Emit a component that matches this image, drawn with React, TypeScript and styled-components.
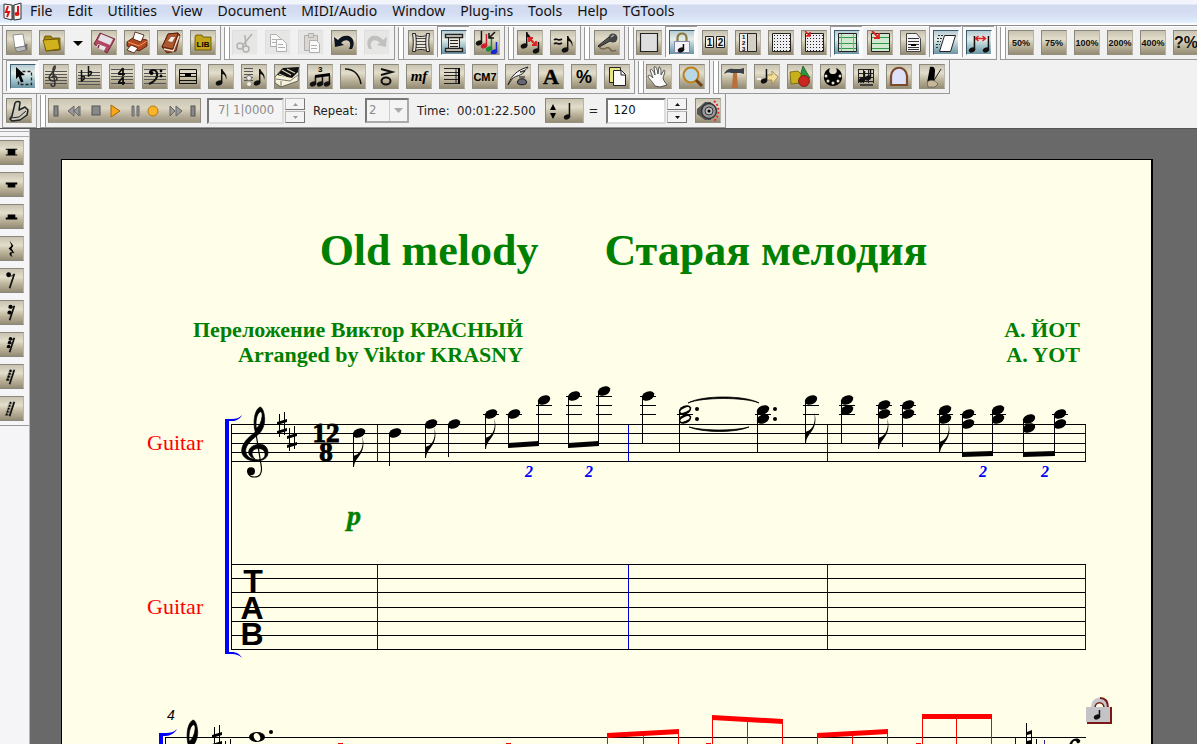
import React from "react";
import styled, { createGlobalStyle, css } from "styled-components";

const GlobalStyle = createGlobalStyle`
  * { box-sizing: border-box; }
  body { margin: 0; background: #f2f2f2; overflow: hidden; }
  button, input, select { font: inherit; margin: 0; padding: 0; }
`;

const ui = `"DejaVu Sans Condensed", "DejaVu Sans", sans-serif`;
const serif = `"Liberation Serif", serif`;
const sans = `"Liberation Sans", sans-serif`;

/* ---------- window ---------- */

const Window = styled.div`
  height: 100vh;
  display: flex;
  flex-direction: column;
  overflow: hidden;
  background: #f2f1f2;
`;

const MenuBar = styled.nav`
  flex: none;
  display: flex;
  align-items: center;
  gap: 15px;
  height: 25px;
  padding: 0 3px 3px;
  background: linear-gradient(#f2f6fc 0, #f2f6fc 4px, #d2daf0 5px, #d5ddf2 14px, #dfedfa 22px, #ffffff 24px);
  font: 14px/20px "Noto Sans", sans-serif;
  color: #111;
`;

const AppIcon = styled.svg`
  flex: none;
  width: 20px;
  height: 20px;
  margin-right: -8px;
`;

const MenuItem = styled.button`
  border: 0;
  background: none;
  color: inherit;
  white-space: nowrap;
`;

const ToolRows = styled.div`
  flex: none;
  border-top: 1px solid #8c8c8c;
  box-shadow: inset 0 1px 0 #fff;
`;

const ToolRow = styled.div`
  display: flex;
  height: 34px;
  padding-left: 2px;
`;

const Group = styled.div<{ $first?: boolean; $lead?: number }>`
  flex: none;
  display: flex;
  align-items: flex-start;
  gap: 7px;
  padding: 4px 4px 0 ${(p) => p.$lead ?? (p.$first ? 3 : 8)}px;
  border-right: 1px solid #989898;
  border-bottom: 1px solid #989898;
  position: relative;
  ${(p) =>
    p.$first
      ? css`border-left: 1px solid #989898;`
      : css`
          margin-left: 3px;
          &::before {
            content: "";
            position: absolute;
            left: 0;
            top: 1px;
            bottom: 0;
            width: 4px;
            border: solid #9a9a9a;
            border-width: 0 1px;
            background: #fff;
          }
        `}
`;

type Look = "normal" | "pressed" | "disabled";

const ToolButton = styled.button<{ $look: Look; $wide?: boolean }>`
  flex: none;
  display: block;
  width: ${(p) => (p.$wide ? 39 : 26)}px;
  height: 25px;
  border: 1px solid #8a887c;
  border-right-color: #b9b5a6;
  border-bottom-color: #958f7e;
  background: linear-gradient(#c8c3b0, #e2decb 35%, #bdb49b 65%, #958c76);
  color: #111;
  overflow: hidden;
  font: bold 10px/22px ${sans};
  white-space: nowrap;
  ${(p) =>
    p.$look === "pressed" &&
    css`
      border-color: #3c5c70 #fff #fff #3c5c70;
      background: linear-gradient(#b5cbd2, #e6eeea 35%, #a5c4cc 65%, #6b95a5);
      box-shadow: 0 0 0 3px #fafafa, -1px -1px 0 3px #9a9a9a;
    `}
  ${(p) =>
    p.$look === "disabled" &&
    css`
      border-color: #dcdcdc #eee #eee #dcdcdc;
      background: #e5e5e3;
      opacity: 0.9;
    `}
`;

const Glyph = styled.svg`
  display: block;
  width: 26px;
  height: 25px;
  margin: -1px;
`;

const ZoomLabel = styled.span<{ $big?: boolean }>`
  display: block;
  font-size: ${(p) => (p.$big ? 16 : 9)}px;
  text-align: center;
`;

const DropButton = styled.button`
  width: 12px;
  height: 25px;
  border: 0;
  background: none;
`;

const Bare = styled.svg`
  display: block;
`;

/* ---------- playback row ---------- */

const Playback = styled.div`
  display: flex;
  align-items: flex-start;
  font: 13px/25px ${ui};
  color: #222;
`;

const Transport = styled.div`
  display: flex;
  justify-content: space-between;
  width: 153px;
  height: 25px;
  margin-right: 6px;
  padding: 0 3px;
  border: 1px solid #8d887a;
  border-bottom-color: #a29d90;
  background: linear-gradient(#cbc5b3, #dbd5c3 40%, #b5ac97 75%, #9f9681);
`;

const TransportButton = styled.button<{ $w: number }>`
  width: ${(p) => p.$w}px;
  height: 23px;
  border: 0;
  background: none;
`;

const Field = styled.input<{ $w: number; $dim?: boolean }>`
  && {
    width: ${(p) => p.$w}px;
    height: 26px;
    padding: 0 0 3px ${(p) => (p.$dim ? 9 : 5)}px;
  }
  border: 2px solid;
  border-color: #777 #ddd #ddd #777;
  background: ${(p) => (p.$dim ? "#f4f4f4" : "#fff")};
  color: ${(p) => (p.$dim ? "#8b8b8b" : "#111")};
  outline: 0;
`;

const Spin = styled.div`
  display: flex;
  flex-direction: column;
  gap: 1px;
  margin: 0 8px 0 1px;
`;

const SpinButton = styled.button`
  display: grid;
  place-items: center;
  width: 20px;
  height: 12px;
  border: 1px solid;
  border-color: #bbb #777 #777 #bbb;
  background: #f4f4f4;
`;

const SelectBox = styled.span`
  position: relative;
  display: block;
  margin-left: 7px;
  svg {
    position: absolute;
    right: 2px;
    top: 2px;
    pointer-events: none;
  }
`;

const Select = styled.select`
  && {
    padding: 0 0 2px 2px;
  }
  display: block;
  appearance: none;
  width: 44px;
  height: 25px;
  border: 2px solid;
  border-color: #777 #aaa #aaa #777;
  border-radius: 0;
  background: #f4f4f4;
  color: #8b8b8b;
  line-height: 19px;
  opacity: 1;
`;

const Label = styled.label`
  display: flex;
  white-space: pre;
`;

const Readout = styled.span`
  margin: 0 9px 0 8px;
  white-space: pre;
`;

const Equals = styled.span`
  margin: 0 8px 0 5px;
`;

/* ---------- workspace ---------- */

const Workspace = styled.main`
  flex: 1;
  min-height: 0;
  display: flex;
  background: #696969;
  border-top: 1px solid #555;
`;

const Palette = styled.aside`
  flex: none;
  width: 30px;
  background: #f5f5f7;
  border-right: 1px solid #b5b5b5;
`;

const PaletteTools = styled.div`
  display: flex;
  flex-direction: column;
  gap: 7px;
  padding: 2px 0 4px;
  border-bottom: 1px solid #999;
  &::before {
    content: "";
    display: block;
    height: 4px;
    margin-bottom: -4px;
    border: solid #aaa;
    border-width: 1px 0;
  }
`;

const RestButton = styled.button`
  width: 24px;
  height: 25px;
  border: 1px solid #8a887c;
  border-left: 0;
  border-right-color: #b9b5a6;
  background: linear-gradient(#c8c3b0, #e2decb 35%, #bdb49b 65%, #958c76);
`;

const Desk = styled.div`
  flex: 1;
  min-width: 0;
  padding: 30px 44px 0 31px;
  overflow: hidden;
`;

const Page = styled.article`
  height: 1400px;
  padding-top: 66px;
  border: solid #000;
  border-width: 1px 2px 2px 1px;
  background: #fffee8;
  font-family: ${serif};
`;

const Title = styled.h1`
  margin: 0;
  padding-left: 34px;
  font: bold 44px/50px ${serif};
  color: #008000;
  text-align: center;
  white-space: pre;
`;

const Credits = styled.div`
  display: flex;
  justify-content: space-between;
  margin-top: 41px;
  padding: 0 71px 0 131px;
  font: bold 22px/25px ${serif};
  color: #008000;
  text-align: right;
`;

const System = styled.section<{ $top: number; $left: number }>`
  display: flex;
  margin-top: ${(p) => p.$top}px;
  padding-left: ${(p) => p.$left}px;
`;

const PartNames = styled.div`
  display: flex;
  flex-direction: column;
  gap: 140px;
  width: 75px;
  padding-top: 47px;
  font: 22px/24px ${serif};
  color: #f00;
`;

const Music = styled.svg`
  flex: none;
  display: block;
`;

/* ---------- icon art ---------- */

const lines = (x1: number, x2: number, ys: number[], c = "#333") =>
  ys.map((y) => <path key={y} d={`M${x1} ${y + 0.5}H${x2}`} stroke={c} fill="none" />);

const dots = (x: number, y: number, n: number, m: number) =>
  Array.from({ length: n * m }, (_, i) => (
    <rect key={i} x={x + (i % n) * 3} y={y + Math.floor(i / n) * 3} width="1" height="1" fill="#222" />
  ));

const eighth = (x: number, y: number, c = "#111") => (
  <g fill={c}>
    <ellipse cx={x} cy={y} rx="3.4" ry="2.5" transform={`rotate(-22 ${x} ${y})`} />
    <path d={`M${x + 2} ${y}V${y - 14}h1.4c.4 3 6 5 3.600 11c.2-4-1.800-5.500-3.600-6V${y}z`} />
  </g>
);

const quarter = (x: number, y: number, c = "#111", h = 12) => (
  <g fill={c}>
    <ellipse cx={x} cy={y} rx="3.300" ry="2.400" transform={`rotate(-22 ${x} ${y})`} />
    <rect x={x + 1.7} y={y - h} width="1.500" height={h} />
  </g>
);

const art: Record<string, React.ReactNode> = {
  new: (
    <g stroke="#777" strokeWidth=".8">
      <path d="M9 17l12-3v6l-10 2z" fill="#666" />
      <path d="M7 5l10-1 2 12-10 2z" fill="#fff" />
      <path d="M9 18l10-2 1 4-9 2z" fill="#bbb" />
    </g>
  ),
  open: (
    <g stroke="#5d4a00" strokeWidth=".8">
      <path d="M5 8l1-2h6l1 2h8v12l-14 1z" fill="#a98a08" />
      <path d="M4 10l15-1 2 10-14 2z" fill="#d2b21c" />
    </g>
  ),
  save: (
    <g>
      <path d="M3 14L9 3l15 6-8 14z" fill="#b04860" stroke="#5a1830" strokeWidth=".8" />
      <path d="M10 4l12 5-3 6-12-5z" fill="#e4e2e8" />
      <path d="M7 14l8 3-2 4-8-4z" fill="#e8e6ea" />
      <path d="M8 15l-1 3" stroke="#802840" strokeWidth="1.500" />
    </g>
  ),
  print: (
    <g stroke="#401000" strokeWidth=".8">
      <path d="M3 12l7-5 13 3v6l-8 5-12-5z" fill="#b4481c" />
      <path d="M11 2l9 3-3 7-8-3z" fill="#fff" />
      <path d="M4 12l11 4 8-5" fill="none" stroke="#ffb080" />
      <path d="M7 15l7 3-4 5-7-3z" fill="#fff" />
    </g>
  ),
  book: (
    <g stroke="#4a1405" strokeWidth=".8">
      <path d="M5 17L11 4l10-1 2 2-4 16-9 2z" fill="#9a4522" />
      <path d="M7 19l9 2 6-15" fill="none" stroke="#f0e4d4" strokeWidth="1.500" />
      <path d="M5 17L11 4l10-1-5 16z" fill="#ad5730" />
      <path d="M11 11l3-4 4 0-3 5z" fill="#eee" stroke="none" />
    </g>
  ),
  lib: (
    <g>
      <path d="M5 7l1-2h6l1 2h8v13H5z" fill="#c4a418" stroke="#5d4a00" strokeWidth=".8" />
      <text x="13" y="17" fontSize="8" fontWeight="bold" fontFamily="Liberation Sans, sans-serif" textAnchor="middle">LIB</text>
    </g>
  ),
  cut: (
    <g fill="none" stroke="#aaa" strokeWidth="1.500">
      <path d="M20 4l-9 11M13 5l1 12" />
      <circle cx="8" cy="16" r="3" />
      <circle cx="14" cy="19" r="3" />
    </g>
  ),
  copy: (
    <g fill="#fafafa" stroke="#a8a8a8">
      <path d="M5.500 4.500h6l4 4v8h-10z" />
      <path d="M11.500 9.500h6l4 4v8h-10z" />
      <path d="M13 14.500h5M13 17.500h7M7 9.500h4M7 12.500h4" />
    </g>
  ),
  paste: (
    <g fill="#d8d4cf" stroke="#a8a8a8">
      <path d="M6.500 5.500h13v15h-13z" />
      <path d="M10.500 3.500h5v4h-5z" />
      <path d="M11.500 10.500h7l3 3v9h-10z" fill="#fafafa" />
      <path d="M13 15.500h6M13 18.500h6" />
    </g>
  ),
  undo: <path d="M3 7l1 10 9-2-3-2c4-4 8-3 9 0 .500 2 0 4-1 6h3c3-5 2-11-3-13-4-1-8 0-11 4z" fill="#0c1420" />,
  redo: <path d="M23 7l-1 10-9-2 3-2c-4-4-8-3-9 0-.500 2 0 4 1 6H5C2 14 3 8 8 6c4-1 8 0 11 4z" fill="#bbb" />,
  scroll: (
    <g fill="#e9e5da" stroke="#222">
      <path d="M7 5c3 2 9 2 12 0v16c-3-2-9-2-12 0z" />
      <path d="M4.500 3.500h3c1 6 1 12 0 18h-3c1-6 1-12 0-18zM18.500 3.500h3c-1 6-1 12 0 18h-3c-1-6-1-12 0-18z" />
      <path d="M8 8.500h10M8 11.500h10M8 14.500h10M8 17.500h10" strokeWidth=".8" />
    </g>
  ),
  page: (
    <g fill="#e9e5da" stroke="#222">
      <path d="M7.500 7v12h11V7z" />
      <path d="M4.500 4.500h17v3h-17zM4.500 18.500h17v3h-17z" strokeWidth="1.400" />
      <path d="M9 10.500h8M9 13.500h8M9 16.500h8" />
    </g>
  ),
  colornotes: (
    <g>
      {quarter(5, 13)}{quarter(10, 16, "#d0202c")}{quarter(15, 19, "#168a34")}{quarter(20, 22, "#1428d0", 10)}
      <path d="M21 2l-5 5M15 3v5h5" stroke="#111" strokeWidth="1.500" fill="none" />
    </g>
  ),
  respace: (
    <g>
      {eighth(7, 16)}{quarter(19, 21, "#111", 9)}
      <path d="M12 8l7 7M12 12V8h4M19 11v4h-4" stroke="#e02020" strokeWidth="1.800" fill="none" />
    </g>
  ),
  approx: (
    <g>
      {eighth(15, 20)}
      <path d="M4 10c3-3 4 2 8-1M4 14c3-3 4 2 8-1" stroke="#111" strokeWidth="1.600" fill="none" />
    </g>
  ),
  mic: (
    <g>
      <path d="M4 16l11-9 3 3-13 7z" fill="#555" stroke="#222" />
      <circle cx="19" cy="8" r="4.500" fill="#444" />
      <path d="M17 7l3-2" stroke="#aaa" strokeWidth="1.500" />
      <path d="M5 17c6 6 8-3 11 2s4 0 6 2" fill="none" stroke="#776a55" strokeWidth="1.500" />
    </g>
  ),
  sheet: <path d="M4.500 3.500h17v18h-17z" fill="#dededf" stroke="#222" strokeWidth="1.200" />,
  lock: (
    <g>
      <path d="M8.500 12V8c0-6 9-6 9 0v4" fill="none" stroke="#8a7a40" strokeWidth="2.200" />
      <path d="M5.500 11.500h15v11h-15z" fill="#f4f4f8" stroke="#88a" />
      {quarter(12, 20, "#111", 6)}
    </g>
  ),
  twelve: (
    <g fill="#eee" stroke="#222">
      <path d="M3.500 6.500h8v11h-8zM14.500 6.500h8v11h-8z" />
      <g fontSize="10" fontWeight="bold" stroke="none" fill="#111" textAnchor="middle" fontFamily="Liberation Sans, sans-serif">
        <text x="7.500" y="16">1</text>
        <text x="18.500" y="16">2</text>
      </g>
    </g>
  ),
  ruler: (
    <g>
      <path d="M4.500 3.500h8v18h-8z" fill="#eee" stroke="#444" />
      <path d="M12.500 3.500h9v18h-9z" fill="#d4d0c4" stroke="#222" />
      <g fontSize="6" fontWeight="bold" fontFamily="Liberation Sans, sans-serif">
        <text x="7" y="9">1</text><text x="7" y="15">2</text><text x="7" y="21">3</text>
      </g>
    </g>
  ),
  grid: <g><path d="M4.500 3.500h18v18h-18z" fill="#eeeef0" stroke="#222" />{dots(6, 5, 6, 6)}</g>,
  gridsnap: (
    <g>
      <path d="M4.500 3.500h18v18h-18z" fill="#eeeef0" stroke="#222" />{dots(6, 5, 6, 6)}
      <path d="M4 1l5 5M9 2v4H5" stroke="#e02020" strokeWidth="1.500" fill="none" />
    </g>
  ),
  guides: <g><path d="M4.500 3.500h18v18h-18z" fill="#cfe8cf" stroke="#222" />{lines(5, 22, [7, 13, 18], "#2f9a4c")}<path d="M7.500 4v17M19.500 4v17" stroke="#6cb880" /></g>,
  guidesnap: (
    <g>
      <path d="M4.500 3.500h18v18h-18z" fill="#cfe8cf" stroke="#222" />{lines(5, 22, [7, 13, 18], "#2f9a4c")}
      <path d="M5 1l7 7M12 3v5H7" stroke="#e02020" strokeWidth="1.800" fill="none" />
    </g>
  ),
  doc: (
    <g>
      <path d="M6.500 3.500h10l4 5v13h-14z" fill="#f4f4f4" stroke="#444" />
      {lines(8, 19, [8, 11, 14, 17, 19], "#333")}<path d="M11 14h5v2h-5z" />
    </g>
  ),
  slant: (
    <g>
      <path d="M11.500 5.500h11l-5 16h-11z" fill="#fff" stroke="#222" />
      <path d="M5 5.500h5M4 8.500h5M4 11.500h4M3 14.500h4M3 17.500h3" stroke="#333" strokeDasharray="2 1" />
    </g>
  ),
  spacing: (
    <g>
      {quarter(6, 20, "#111", 14)}{quarter(20, 20, "#111", 14)}
      <path d="M10 8.500h9M12.500 6l-3 2.500 3 2.500M16.500 6l3 2.500-3 2.500" stroke="#e02020" strokeWidth="1.500" fill="none" />
    </g>
  ),
  select: (
    <g>
      <path d="M12.500 7.500h9v13h-13v-4" fill="none" stroke="#222" strokeWidth="1.300" strokeDasharray="3 2" />
      <path d="M6 3l9 8-4 .5 2.500 6-2.500 1-2.500-6L6 15z" fill="#000" />
    </g>
  ),
  treble: (
    <g>
      {lines(2, 24, [7, 10, 13, 16, 19], "#555")}
      <path d="M8 20c0 3 4 3 4 0l-2-14c0-2 1-4 2-4 2 4-6 8-6 12 1 4 8 4 8 0-1-3-5-3-5 0" fill="none" stroke="#333" strokeWidth="1.500" />
    </g>
  ),
  keysig: (
    <g>
      {lines(2, 24, [8, 11, 14, 17, 20], "#555")}
      <path d="M5.500 6v11c3-1 5-6 0-4M12.500 2v10c3-1 5-6 0-4" fill="none" stroke="#111" strokeWidth="1.500" />
    </g>
  ),
  timesig: (
    <g>
      {lines(2, 24, [5, 9, 12, 15, 19], "#555")}
      <path d="M14 4v8M9.500 9.500L14 4M9 10h7M14 13v8M9.500 18.500L14 13M9 19h7" fill="none" stroke="#111" strokeWidth="1.800" />
    </g>
  ),
  bass: (
    <g>
      {lines(2, 24, [5, 9, 12, 15, 19], "#555")}
      <path d="M7 20c5-2 9-6 8-11-1-4-7-4-7 0" fill="none" stroke="#111" strokeWidth="2.200" />
      <circle cx="9.500" cy="9" r="2" /><circle cx="19" cy="7" r="1.400" /><circle cx="19" cy="12" r="1.400" />
    </g>
  ),
  measure: <g><path d="M4.500 5.500h17v14h-17z" fill="none" stroke="#111" />{lines(4, 22, [9, 12, 16], "#111")}<path d="M10 9h6v3h-6z" /></g>,
  eighth: eighth(11, 19),
  speedy: (
    <g>
      {lines(3, 12, [4, 7, 10, 13, 16], "#555")}
      {eighth(16, 19)}<circle cx="8" cy="14" r="2.500" fill="#eee" stroke="#777" /><circle cx="8" cy="20" r="2" fill="#eee" />
    </g>
  ),
  piano: (
    <g>
      <path d="M1 13L8 5l17-1-1 13-17 6-6-4z" fill="#f6f2d8" stroke="#444" strokeWidth=".8" />
      <path d="M3 11L9 4l16-1-1 5-6 6z" fill="#111" />
      <path d="M8 6l9 5M13 5l8 4M5 10l7 3" stroke="#d8d4bc" strokeWidth="1.200" />
      <path d="M2 15l14 2 8-6M7 22V17" fill="none" stroke="#555" strokeWidth=".8" />
    </g>
  ),
  tuplet: (
    <g>
      {quarter(6, 20, "#111", 8)}{quarter(13, 20, "#111", 9)}{quarter(20, 20, "#111", 9)}
      <path d="M8 11l15-2v3L8 14z" />
      <text x="11" y="8" fontSize="8" fontWeight="bold" fontFamily="Liberation Sans, sans-serif">3</text>
    </g>
  ),
  slur: <path d="M5 5c8 0 14 4 16 15" fill="none" stroke="#111" strokeWidth="1.500" />,
  artic: (
    <g fill="none" stroke="#111" strokeWidth="2">
      <path d="M8 5l11 3-11 3" /><ellipse cx="13" cy="17" rx="4.500" ry="3.500" />
    </g>
  ),
  mf: <text x="13" y="17" fontSize="15" fontStyle="italic" fontWeight="bold" fontFamily="Liberation Serif, serif" textAnchor="middle">mf</text>,
  repeat: <g>{lines(5, 20, [4, 8, 11, 15, 19], "#222")}<path d="M17 4.500v15" stroke="#222" /><path d="M19 4h2v16h-2z" /></g>,
  chord: <text x="13" y="17" fontSize="11" fontWeight="bold" fontFamily="Liberation Sans, sans-serif" textAnchor="middle">CM7</text>,
  lyrics: (
    <g>
      <path d="M3 21C6 12 12 6 23 3c-2 4-6 4-8 5 2 0 3 0 5-1-3 5-9 4-13 8z" fill="#f4f4f4" stroke="#222" />
      <path d="M13 17c0-3 8-3 8 0 4 5-12 5-8 0z" fill="#667" stroke="#111" /><path d="M14 13h6" stroke="#111" />
    </g>
  ),
  text: <text x="13" y="20" fontSize="22" fontFamily="Liberation Serif, serif" stroke="#111" strokeWidth=".5" textAnchor="middle">A</text>,
  percent: <text x="13" y="19" fontSize="18" fontWeight="bold" fontFamily="Liberation Sans, sans-serif" textAnchor="middle">%</text>,
  layout: (
    <g stroke="#222">
      <path d="M5.500 3.500h11v15h-11z" fill="#e8e488" /><path d="M9.500 6.500h8l4 4v11h-12z" fill="#fafafa" /><path d="M17 7v4h4" fill="none" />
    </g>
  ),
  hand: <path d="M9 22C6 17 2 14 2 12c1-2 4 1 5 2L4 6c1-2 3 0 5 5L8 3c2-1 3 1 4 7l1-7c2 0 2 3 2 8l3-5c2 1 0 4-1 8 1 4 3 5 4 7l-7 2z" fill="#fafafa" stroke="#444" strokeWidth=".9" />,
  zoom: (
    <g>
      <circle cx="12" cy="11" r="7.500" fill="#b8d8e8" stroke="#c08018" strokeWidth="2" />
      <path d="M17 16l6 6" stroke="#704010" strokeWidth="3" />
    </g>
  ),
  hammer: (
    <g>
      <path d="M12 9h4l1 15h-6z" fill="#b8703c" /><path d="M3 10c2-5 6-6 10-5h6l4-1v6l-4-1h-9c-3-1-5 0-7 1z" fill="#3a4048" />
    </g>
  ),
  movenote: (
    <g>
      <path d="M13 11h5V7l6 6-6 7v-4h-5z" fill="#f2dc9c" stroke="#a08040" strokeWidth=".8" />{quarter(10, 17)}
      <path d="M3 15h4" stroke="#eee" strokeWidth="2" />
    </g>
  ),
  shapes: (
    <g>
      <path d="M16 2l7 12-11 1z" fill="#28983c" stroke="#105020" strokeWidth=".7" />
      <path d="M3 8l8-1 3 3v9l-10 1z" fill="#c8b018" stroke="#605000" strokeWidth=".7" />
      <circle cx="17" cy="17" r="5.500" fill="#c82820" stroke="#601010" strokeWidth=".7" />
    </g>
  ),
  palette: (
    <g>
      <path d="M10 4C1 7 2 22 13 22s12-15 3-18c2 4 0 6-3 6s-5-2-3-6z" />
      {[[6, 12], [8, 17], [13, 19], [18, 17], [20, 12]].map(([x, y]) => <circle key={x} cx={x} cy={y} r="1.500" fill="#e2decb" />)}
    </g>
  ),
  graphic: (
    <g>
      {lines(5, 21, [5, 9, 13, 17], "#222")}<path d="M5.500 5v14M10.500 5v14M20.500 5v14M15.500 5v14" stroke="#222" />
      {quarter(9, 16, "#111", 9)}{quarter(15, 14, "#111", 9)}<path d="M7 21h13" stroke="#222" strokeWidth="1.500" />
    </g>
  ),
  mirror: <path d="M5 21V12C6 1 20 1 21 12v9z" fill="#dfe0fa" stroke="#7a4a2c" strokeWidth="2.200" />,
  metronome: (
    <g>
      <path d="M11 3c4-1 5 1 5 4l-1 12H8z" /><path d="M22 5L14 18" stroke="#222" />
      <path d="M8 18c4-3 8-2 11 2l-3 3H9z" fill="#c8b898" stroke="#555" strokeWidth=".7" />
    </g>
  ),
  foot: (
    <g stroke="#1c2228" strokeWidth="1.500" strokeLinejoin="round">
      <path d="M6 18L9 5c1-2 5-2 5 0l-1 7 6-3 3 3-1 5-7 5-8 1-2-2z" fill="#cfcbba" />
      <path d="M5 20l8-1 7-6" fill="none" strokeWidth="1" />
    </g>
  ),
  speaker: (
    <g>
      <path d="M2 11l8-7h6v18h-6l-8-6z" fill="#555" /><circle cx="14" cy="13" r="7.500" fill="#999" stroke="#333" strokeWidth="1.500" />
      <circle cx="14" cy="13" r="4" fill="#bbb" stroke="#333" /><circle cx="14" cy="13" r="1.500" />
      <path d="M19 3c6 5 6 15 0 20" fill="none" stroke="#d83030" strokeWidth="2" strokeDasharray="2 2" />
    </g>
  ),
};

const Tool = ({ name, look = "normal" }: { name: string; look?: Look }) => (
  <ToolButton $look={look} aria-label={name} disabled={look === "disabled"}>
    <Glyph viewBox="0 0 26 25">{art[name]}</Glyph>
  </ToolButton>
);

const Tools = ({ names, pressed = [], disabled = [] }: { names: string[]; pressed?: string[]; disabled?: string[] }) => (
  <>
    {names.map((n) => (
      <Tool key={n} name={n} look={pressed.includes(n) ? "pressed" : disabled.includes(n) ? "disabled" : "normal"} />
    ))}
  </>
);

const Spinner = ({ label, color }: { label: string; color: string }) => (
  <Spin>
    <SpinButton aria-label={`${label} up`}><Bare width="5" height="3"><path d="M0 3l2.500-3L5 3z" fill={color} /></Bare></SpinButton>
    <SpinButton aria-label={`${label} down`}><Bare width="5" height="3"><path d="M0 0l2.500 3L5 0z" fill={color} /></Bare></SpinButton>
  </Spin>
);

const transport: [string, number, React.ReactNode][] = [
  ["To start", 7, <rect x="2" y="7" width="4" height="10" fill="#888" stroke="#555" />],
  ["Rewind", 16, <path d="M8 7v10l-6-5zM13 7v10L8 12zM14 7v10" fill="#999" stroke="#666" />],
  ["Stop", 12, <rect x="2" y="7" width="8" height="9" fill="#888" stroke="#555" />],
  ["Play", 13, <path d="M2 6l9 6-9 6z" fill="#f5a81c" stroke="#a86400" />],
  ["Pause", 10, <path d="M2 7h2v10H2zM7 7h2v10H7z" fill="#999" stroke="#666" />],
  ["Record", 13, <circle cx="6" cy="12" r="5" fill="#fbb32c" stroke="#b87800" />],
  ["Forward", 15, <path d="M2 7l5 5-5 5zM8 7l6 5-6 5z" fill="#999" stroke="#666" />],
  ["To end", 7, <rect x="1" y="7" width="4" height="10" fill="#888" stroke="#555" />],
];

/* ---------- rest palette ---------- */

const restFlags = (n: number, step: number, r: number) => (
  <g>
    <path d="M15 5L10 20" stroke="#111" strokeWidth="1.800" />
    {Array.from({ length: n }, (_, i) => (
      <g key={i}>
        <circle cx={(n > 1 ? 11 : 9) - i} cy={6 + i * step} r={r} />
        <path d={`M${9 - i} ${7 + i * step}q3 1 5 -1`} fill="none" stroke="#111" strokeWidth={n > 3 ? 0.5 : 1} />
      </g>
    ))}
  </g>
);

const rests: [string, React.ReactNode][] = [
  ["Double whole rest", <path d="M6 8h12v1h-2v5h2v1H6v-1h2V9H6z" />],
  ["Whole rest", <path d="M6 10h12v2h-2v3H8v-3H6z" />],
  ["Half rest", <path d="M6 15h12v-2h-2v-3H8v3H6z" />],
  ["Quarter rest", <path d="M10 4l4 5-2 3 3 5c-3-1-4 0-2 4-5-3-3-6 0-5L9 12l3-3z" />],
  ["8th rest", restFlags(1, 4, 2.5)],
  ["16th rest", restFlags(2, 6, 2.2)],
  ["32nd rest", restFlags(3, 4, 1.8)],
  ["64th rest", restFlags(4, 3, 1.3)],
  ["128th rest", restFlags(5, 3, 1.1)],
];

/* ---------- notation ---------- */

const Head = ({ x, y, hollow }: { x: number; y: number; hollow?: boolean }) => (
  <g transform={`translate(${x} ${y}) rotate(-24)`}>
    <ellipse rx="6.500" ry="4.300" />
    {hollow && <ellipse rx="5" ry="2" fill="#fffee8" />}
  </g>
);

const Line = ({ x, y, w = 1, h = 1, c = "#000" }: { x: number; y: number; w?: number; h?: number; c?: string }) => (
  <rect x={x} y={y} width={w} height={h} fill={c} shapeRendering="crispEdges" />
);

type NoteProps = { x: number; ys: number[]; end: number; flag?: boolean; ledgers?: number[]; hollow?: boolean };

const Note = ({ x, ys, end, flag, ledgers = [], hollow }: NoteProps) => (
  <g>
    {ledgers.map((l) => <Line key={l} x={x - 8} y={l} w={16} />)}
    {ys.map((y) => <Head key={y} x={x} y={y} hollow={hollow} />)}
    <Line x={x - 6} y={ys[0]} h={end - ys[0]} />
    {flag && (
      <path d={`M${x + 3} ${end - 30}C${x + 7} ${end - 19} ${x + 2} ${end - 12} ${x - 2} ${end - 7}C${x - 4} ${end - 4} ${x - 5} ${end - 2} ${x - 5} ${end + 1}H${x - 6}V${end - 10}C${x} ${end - 11} ${x + 6} ${end - 18} ${x + 3} ${end - 30}z`} />
    )}
  </g>
);

const Beam = ({ x1, y1, x2, y2, c = "#000" }: { x1: number; y1: number; x2: number; y2: number; c?: string }) => (
  <path d={`M${x1} ${y1}L${x2} ${y2}v5L${x1} ${y1 + 5}z`} fill={c} />
);

const Sharp = ({ x, y }: { x: number; y: number }) => (
  <path transform={`translate(${x} ${y})`} d="M-3 -11h1v23h-1zM2 -13h1v23h-1zM-5 -3L5 -6v3L-5 0zM-5 6L5 3v3L-5 9z" />
);

const Clef = ({ x, y }: { x: number; y: number }) => (
  <g transform={`translate(${x} ${y}) scale(.3333)`}>
    <path
      fillRule="evenodd"
      d="M390 111C376 118 370 145 373 172L376 186C350 206 335 222 335 243C336 262 355 275 383 273C402 271 414 262 414 248C414 233 404 223 390 223C370 223 356 234 356 247C356 256 364 264 375 267C367 258 365 252 367 246C370 238 378 235 388 236C400 237 405 244 405 253C405 264 396 270 382 269C360 268 347 258 347 241C348 226 362 212 382 196C397 184 405 165 404 145C403 128 398 112 390 111ZM391 125C396 126 397 132 396 140C394 156 388 168 379 175C377 160 378 132 391 125Z"
      stroke="#000"
      strokeWidth="2"
    />
    <path d="M375 172L394 290C397 312 388 321 373 321C365 321 358 317 355 311" fill="none" stroke="#000" strokeWidth="3.500" />
    <circle cx="363" cy="304" r="12" />
  </g>
);

const Tuplet = ({ x }: { x: number }) => (
  <text x={x} y="477" fontFamily="Liberation Serif, serif" fontSize="16" fontWeight="bold" fontStyle="italic" fill="#0000ff" textAnchor="middle">2</text>
);

const L1 = [414], L2 = [405, 414], L3 = [396, 405, 414];

const notes: NoteProps[] = [
  { x: 359, ys: [433], end: 466, flag: true },
  { x: 395, ys: [433], end: 466 },
  { x: 431, ys: [424], end: 457, flag: true },
  { x: 454, ys: [424], end: 457 },
  { x: 491, ys: [414], end: 448, flag: true, ledgers: L1 },
  { x: 514, ys: [414], end: 447, ledgers: L1 },
  { x: 544, ys: [400], end: 445, ledgers: L2 },
  { x: 574, ys: [396], end: 447, ledgers: L3 },
  { x: 604, ys: [391], end: 445, ledgers: L3 },
  { x: 648, ys: [396], end: 443, ledgers: L3 },
  { x: 685, ys: [410, 419], end: 452, ledgers: L1, hollow: true },
  { x: 763, ys: [410, 419], end: 452, ledgers: L1 },
  { x: 811, ys: [400], end: 442, flag: true, ledgers: L2 },
  { x: 847, ys: [400, 410], end: 443, ledgers: L2 },
  { x: 884, ys: [405, 414], end: 448, flag: true, ledgers: L2 },
  { x: 908, ys: [405, 414], end: 447, ledgers: L2 },
  { x: 945, ys: [410, 419], end: 452, flag: true, ledgers: L1 },
  { x: 968, ys: [414, 424], end: 456, ledgers: L1 },
  { x: 998, ys: [410, 419], end: 455, ledgers: L1 },
  { x: 1029, ys: [419, 428], end: 456 },
  { x: 1060, ys: [414, 424], end: 455, ledgers: L1 },
];

const FirstSystem = () => (
  <Music width="868" height="280" viewBox="222 384 868 280">
    {[424, 433, 443, 452, 461, 564, 578, 592, 607, 621, 635, 649].map((y) => <Line key={y} x={231} y={y} w={855} />)}
    <Line x={231} y={424} h={226} />
    {[377, 628, 827, 1085].map((x) => (
      <g key={x}>
        <Line x={x} y={425} h={36} c="#0000d8" />
        <Line x={x} y={565} h={84} c="#0000d8" />
      </g>
    ))}
    <path d="M225 419h7c4 0 7-1 10-4-2 4-6 6-10 6h-3v231h3c4 0 8 2 10 6-3-3-6-4-10-4h-7z" fill="#0000ff" />
    <Clef x={130} y={370} />
    <Sharp x={282} y={425} />
    <Sharp x={292} y={439} />
    <g fontFamily="Liberation Serif, serif" fontWeight="bold" fontSize="27" textAnchor="middle" stroke="#000" strokeWidth="1">
      <text x="326" y="442">12</text>
      <text x="326" y="461">8</text>
    </g>
    {notes.map((n) => <Note key={n.x} {...n} />)}
    <Beam x1={508} y1={443} x2={539} y2={441} />
    <Beam x1={568} y1={443} x2={599} y2={441} />
    <Beam x1={962} y1={452} x2={993} y2={451} />
    <Beam x1={1023} y1={452} x2={1055} y2={451} />
    {[697, 775].map((x) => [409, 419].map((y) => <circle key={`${x}${y}`} cx={x} cy={y} r="2" />))}
    <path d="M688 403C702 395 745 395 759 403C745 397 702 397 688 403zM689 427C704 433 735 433 749 427C735 431 704 431 689 427z" stroke="#000" strokeWidth=".8" />
    <Tuplet x={529} /><Tuplet x={589} /><Tuplet x={983} /><Tuplet x={1045} />
    <text x="354" y="525" fontFamily="Liberation Serif, serif" fontWeight="bold" fontStyle="italic" fontSize="28" fill="#008000" stroke="#008000" strokeWidth=".5" textAnchor="middle">p</text>
    <g fontFamily="Liberation Sans, sans-serif" fontWeight="bold" fontSize="32" textAnchor="middle">
      <text x="253" y="592">T</text>
      <text x="252" y="619">A</text>
      <text x="252" y="645">B</text>
    </g>
  </Music>
);

const redBeams = [
  [607, 733, 679, 729, 643],
  [712, 715, 783, 719, 747],
  [817, 733, 888, 729, 852],
  [922, 714, 992, 714, 956],
];

const SecondSystem = () => (
  <Music width="960" height="120" viewBox="156 692 960 120">
    {[737, 746, 756, 765, 774].map((y) => <Line key={y} x={165} y={y} w={921} />)}
    <Line x={165} y={737} h={75} />
    <path d="M159 733h7c4 0 8-1 11-4-2 4-7 7-11 7h-3v80h-4z" fill="#0000ff" />
    <text x="167" y="720" fontFamily="Liberation Sans, sans-serif" fontStyle="italic" fontSize="14">4</text>
    <Clef x={63} y={683} />
    <Sharp x={217} y={738} />
    <Sharp x={228} y={752} />
    <ellipse cx="257" cy="737" rx="8" ry="5" />
    <ellipse cx="257" cy="737" rx="3" ry="4" fill="#fffee8" transform="rotate(-25 257 737)" />
    <circle cx="271" cy="732" r="2" />
    {redBeams.map(([x1, y1, x2, y2, m]) => (
      <g key={x1}>
        <Beam x1={x1} y1={y1} x2={x2} y2={y2} c="#f00" />
        <Line x={x1} y={y1} h={70} c="#f00" />
        <Line x={m} y={(y1 + y2) / 2} h={70} c="#f00" />
        <Line x={x2 - 1} y={y2} h={70} c="#f00" />
      </g>
    ))}
    {[338, 506, 706, 916].map((x) => <Line key={x} x={x} y={743} w={5} c="#f00" />)}
    <Line x={1015} y={738} h={36} c="#0000d8" />
    <path d="M1026 723h1v9l5-2v22h-1v-8l-5 2zM1027 735v6l4-1v-6z" fillRule="evenodd" />
    <Line x={1036} y={739} h={20} />
    <Line x={1044} y={740} h={20} c="#402080" />
    <path d="M1069 745c2-7 9-8 11-5 1 2-1 4-3 3-1-4-5-2-5 3z" />
    <g>
      <path d="M1091 708c0-14 17-14 17 0v2h-17z" fill="#c8c8cc" />
      <path d="M1095 708c0-7 9-7 9 0z" fill="#fffee8" stroke="#7a1818" strokeWidth="1.500" />
      <path d="M1100 698c6 0 8 5 8 10" fill="none" stroke="#7a1818" strokeWidth="2" />
      <path d="M1087 707h25v17h-25z" fill="#7a1818" />
      <path d="M1086 707h24v15h-24z" fill="#c4c4c8" />
      {quarter(1097, 717, "#111", 7)}
    </g>
  </Music>
);

const menus = ["File", "Edit", "Utilities", "View", "Document", "MIDI/Audio", "Window", "Plug-ins", "Tools", "Help", "TGTools"];

export default function App() {
  return (
    <Window>
      <GlobalStyle />
      <MenuBar>
        <AppIcon viewBox="0 0 20 20">
          <path d="M1 3l8 1v15l-8-2zM18 2l-7 2v15l7-1z" fill="#f4f4f4" stroke="#333" />
          <path d="M9 4h2v15H9z" fill="#555" />
          <path d="M5 5l-2 6h3l-2 5M15 5v8" stroke="#e01010" strokeWidth="2" fill="none" />
          <ellipse cx="14" cy="13" rx="2.500" ry="2" fill="#e01010" />
        </AppIcon>
        {menus.map((m) => <MenuItem key={m}>{m}</MenuItem>)}
      </MenuBar>
      <ToolRows>
        <ToolRow>
          <Group $first>
            <Tools names={["new", "open"]} />
            <DropButton aria-label="Recent files"><Bare width="12" height="25"><path d="M1 11h10l-5 5z" /></Bare></DropButton>
            <Tools names={["save", "print", "book", "lib"]} />
          </Group>
          <Group>
            <Tools names={["cut", "copy", "paste", "undo", "redo"]} disabled={["cut", "copy", "paste", "redo"]} />
          </Group>
          <Group $lead={10}><Tools names={["scroll", "page", "colornotes"]} pressed={["page"]} /></Group>
          <Group $lead={9}><Tools names={["respace", "approx"]} /></Group>
          <Group $lead={10}><Tools names={["mic"]} /></Group>
          <Group>
            <Tools
              names={["sheet", "lock", "twelve", "ruler", "grid", "gridsnap", "guides", "guidesnap", "doc", "slant", "spacing"]}
              pressed={["lock", "guides", "slant", "spacing"]}
            />
          </Group>
          <Group>
            {["50%", "75%", "100%", "200%", "400%"].map((z) => (
              <ToolButton key={z} $look="normal"><ZoomLabel>{z}</ZoomLabel></ToolButton>
            ))}
            <ToolButton $look="normal"><ZoomLabel $big>?%</ZoomLabel></ToolButton>
          </Group>
        </ToolRow>
        <ToolRow>
          <Group $first $lead={7}>
            <Tools
              names={["select", "treble", "keysig", "timesig", "bass", "measure", "eighth", "speedy", "piano", "tuplet", "slur", "artic", "mf", "repeat", "chord", "lyrics", "text", "percent", "layout"]}
              pressed={["select"]}
            />
          </Group>
          <Group><Tools names={["hand", "zoom"]} /></Group>
          <Group><Tools names={["hammer", "movenote", "shapes", "palette", "graphic", "mirror", "metronome"]} /></Group>
        </ToolRow>
        <ToolRow>
          <Group $first><Tool name="foot" /></Group>
          <Group>
            <Playback>
              <Transport>
                {transport.map(([label, w, shape]) => (
                  <TransportButton key={label} $w={w} aria-label={label}>
                    <Bare width={w} height="23">{shape}</Bare>
                  </TransportButton>
                ))}
              </Transport>
              <Field $w={77} $dim aria-label="Position" defaultValue="7| 1|0000" />
              <Spinner label="Position" color="#999" />
              <Label>
                Repeat:
                <SelectBox>
                  <Select disabled defaultValue="2"><option>2</option></Select>
                  <Bare width="18" height="21"><path d="M.5 0v21" stroke="#ccc" /><path d="M5 8h9l-4.500 5z" fill="#aaa" /></Bare>
                </SelectBox>
              </Label>
              <Readout>Time:  00:01:22.500</Readout>
              <ToolButton $look="normal" $wide aria-label="Beat unit">
                <Bare width="37" height="23">
                  <path d="M4 11l3-6 3 6zM4 14l3 6 3-6z" />
                  {quarter(21, 18, "#111", 14)}
                </Bare>
              </ToolButton>
              <Equals>=</Equals>
              <Field $w={60} aria-label="Tempo" defaultValue="120" />
              <Spinner label="Tempo" color="#111" />
              <Tool name="speaker" />
            </Playback>
          </Group>
        </ToolRow>
      </ToolRows>
      <Workspace>
        <Palette>
          <PaletteTools>
            {rests.map(([label, shape]) => (
              <RestButton key={label} aria-label={label}><Bare width="23" height="23" viewBox="0 0 24 24">{shape}</Bare></RestButton>
            ))}
          </PaletteTools>
        </Palette>
        <Desk>
          <Page>
            <Title>{"Old melody\u00a0\u00a0\u00a0\u00a0\u00a0\u00a0Старая мелодия"}</Title>
            <Credits>
              <div>Переложение Виктор КРАСНЫЙ<br />Arranged by Viktor KRASNY</div>
              <div>А. ЙОТ<br />A. YOT</div>
            </Credits>
            <System $top={17} $left={85}>
              <PartNames><span>Guitar</span><span>Guitar</span></PartNames>
              <FirstSystem />
            </System>
            <System $top={28} $left={94}><SecondSystem /></System>
          </Page>
        </Desk>
      </Workspace>
    </Window>
  );
}
